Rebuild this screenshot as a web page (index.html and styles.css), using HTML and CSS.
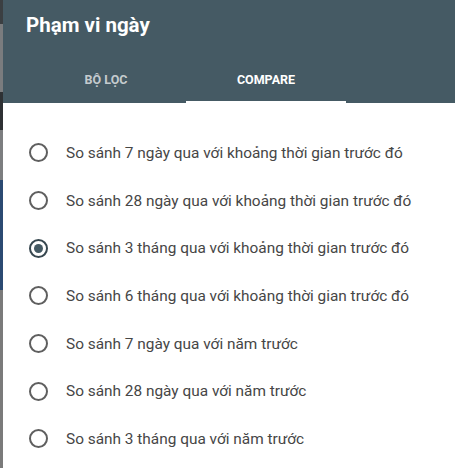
FILE: index.html
```html
<!DOCTYPE html>
<html lang="vi">
<head>
<meta charset="utf-8">
<title>Phạm vi ngày</title>
<link rel="stylesheet" href="styles.css">
</head>
<body>
<div class="page">
  <div class="backdrop"></div>
  <div class="dialog">
    <header class="header">
      <h1 class="title">Phạm vi ngày</h1>
      <nav class="tabs">
        <div class="tab">BỘ LỌC</div>
        <div class="tab active">COMPARE</div>
      </nav>
    </header>
    <ul class="options">
      <li class="option"><span class="radio"></span><span class="label">So sánh 7 ngày qua với khoảng thời gian trước đó</span></li>
      <li class="option"><span class="radio"></span><span class="label">So sánh 28 ngày qua với khoảng thời gian trước đó</span></li>
      <li class="option"><span class="radio checked"></span><span class="label">So sánh 3 tháng qua với khoảng thời gian trước đó</span></li>
      <li class="option"><span class="radio"></span><span class="label">So sánh 6 tháng qua với khoảng thời gian trước đó</span></li>
      <li class="option"><span class="radio"></span><span class="label">So sánh 7 ngày qua với năm trước</span></li>
      <li class="option"><span class="radio"></span><span class="label">So sánh 28 ngày qua với năm trước</span></li>
      <li class="option"><span class="radio"></span><span class="label">So sánh 3 tháng qua với năm trước</span></li>
    </ul>
  </div>
</div>
</body>
</html>
```

FILE: styles.css
```css
html, body {
  margin: 0;
  padding: 0;
  background: #ffffff;
}
body {
  font-family: Roboto, "Liberation Sans", sans-serif;
}
.page {
  display: flex;
  width: 455px;
  height: 468px;
  overflow: hidden;
}
.backdrop {
  width: 3px;
  flex: none;
  background: linear-gradient(to bottom,
    #3b3f42 0px, #3b3f42 24px,
    #7a7c7e 24px, #7a7c7e 92px,
    #2e3134 92px, #2e3134 130px,
    #7c7e80 130px, #7c7e80 180px,
    #2b4a72 180px, #2b4a72 290px,
    #7a7a7a 290px, #7a7a7a 468px);
}
.dialog {
  flex: 1;
  display: flex;
  flex-direction: column;
  background: #ffffff;
}
.header {
  background: #455a64;
  display: flex;
  flex-direction: column;
}
.title {
  margin: 0;
  padding: 13px 0 0 23px;
  font-size: 20.5px;
  line-height: 24px;
  font-weight: 700;
  color: #ffffff;
}
.tabs {
  display: flex;
  padding-left: 23px;
  margin-top: 18px;
}
.tab {
  width: 160px;
  height: 48px;
  box-sizing: border-box;
  display: flex;
  align-items: center;
  justify-content: center;
  font-size: 12.5px;
  font-weight: 700;
  color: rgba(255, 255, 255, 0.7);
  border-bottom: 2px solid transparent;
  padding-top: 2px;
}
.tab.active {
  color: #ffffff;
  border-bottom-color: #ffffff;
}
.options {
  list-style: none;
  margin: 0;
  padding: 26px 0 0 0;
}
.option {
  height: 47.7px;
  display: flex;
  align-items: center;
  padding-left: 26px;
}
.radio {
  width: 19px;
  height: 19px;
  box-sizing: border-box;
  border: 2px solid #5f5f5f;
  border-radius: 50%;
  flex: none;
  display: flex;
  align-items: center;
  justify-content: center;
}
.radio.checked {
  border-color: #37474f;
}
.radio.checked::after {
  content: "";
  width: 9px;
  height: 9px;
  border-radius: 50%;
  background: #455a64;
}
.label {
  margin-left: 18px;
  font-size: 15.4px;
  color: #464646;
}
```
